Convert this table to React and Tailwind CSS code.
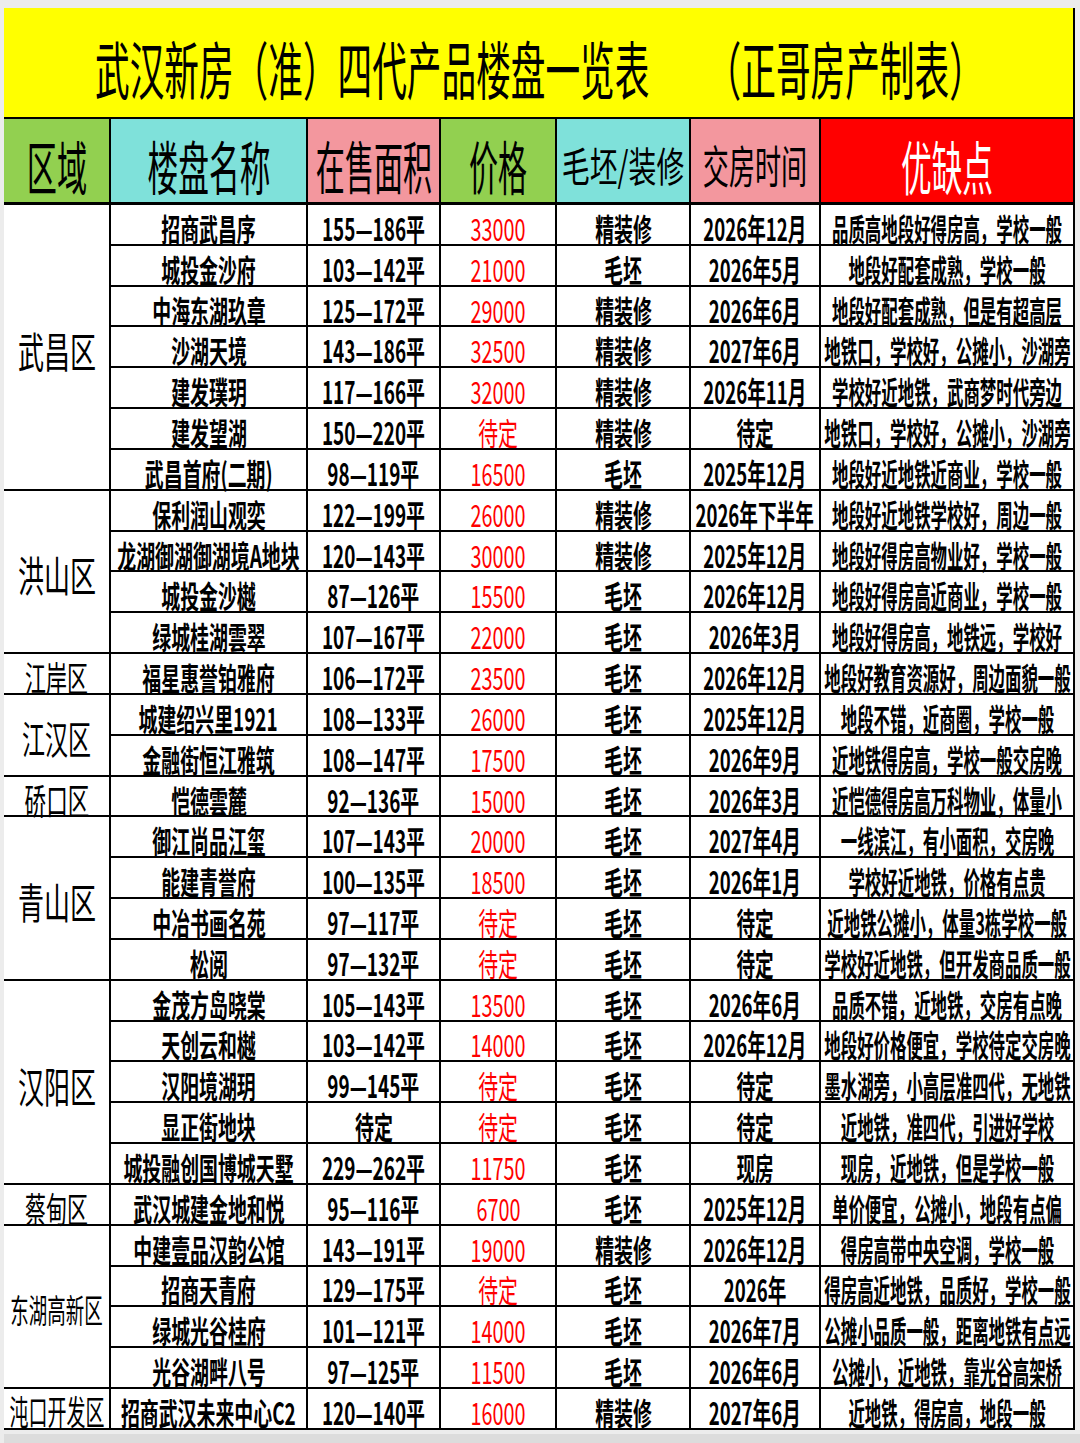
import React from "react";

const groups = [
  {
    d: "武昌区",
    c: "text-[42px] scale-x-[0.62]",
    span: "row-span-7",
    rows: [
      ["招商武昌序", "155—186平", "33000", "精装修", "2026年12月", "品质高地段好得房高，学校一般"],
      ["城投金沙府", "103—142平", "21000", "毛坯", "2026年5月", "地段好配套成熟，学校一般"],
      ["中海东湖玖章", "125—172平", "29000", "精装修", "2026年6月", "地段好配套成熟，但是有超高层"],
      ["沙湖天境", "143—186平", "32500", "精装修", "2027年6月", "地铁口，学校好，公摊小，沙湖旁"],
      ["建发璞玥", "117—166平", "32000", "精装修", "2026年11月", "学校好近地铁，武商梦时代旁边"],
      ["建发望湖", "150—220平", "待定", "精装修", "待定", "地铁口，学校好，公摊小，沙湖旁"],
      ["武昌首府(二期)", "98—119平", "16500", "毛坯", "2025年12月", "地段好近地铁近商业，学校一般"],
    ],
  },
  {
    d: "洪山区",
    c: "text-[42px] scale-x-[0.62]",
    span: "row-span-4",
    rows: [
      ["保利润山观奕", "122—199平", "26000", "精装修", "2026年下半年", "地段好近地铁学校好，周边一般"],
      ["龙湖御湖御湖境A地块", "120—143平", "30000", "精装修", "2025年12月", "地段好得房高物业好，学校一般"],
      ["城投金沙樾", "87—126平", "15500", "毛坯", "2026年12月", "地段好得房高近商业，学校一般"],
      ["绿城桂湖雲翠", "107—167平", "22000", "毛坯", "2026年3月", "地段好得房高，地铁远，学校好"],
    ],
  },
  {
    d: "江岸区",
    c: "text-[35px] scale-x-[0.6]",
    span: "row-span-1",
    rows: [["福星惠誉铂雅府", "106—172平", "23500", "毛坯", "2026年12月", "地段好教育资源好，周边面貌一般"]],
  },
  {
    d: "江汉区",
    c: "text-[39px] scale-x-[0.59]",
    span: "row-span-2",
    rows: [
      ["城建绍兴里1921", "108—133平", "26000", "毛坯", "2025年12月", "地段不错，近商圈，学校一般"],
      ["金融街恒江雅筑", "108—147平", "17500", "毛坯", "2026年9月", "近地铁得房高，学校一般交房晚"],
    ],
  },
  {
    d: "硚口区",
    c: "text-[36px] scale-x-[0.6]",
    span: "row-span-1",
    rows: [["恺德雲麓", "92—136平", "15000", "毛坯", "2026年3月", "近恺德得房高万科物业，体量小"]],
  },
  {
    d: "青山区",
    c: "text-[42px] scale-x-[0.62]",
    span: "row-span-4",
    rows: [
      ["御江尚品江玺", "107—143平", "20000", "毛坯", "2027年4月", "一线滨江，有小面积，交房晚"],
      ["能建青誉府", "100—135平", "18500", "毛坯", "2026年1月", "学校好近地铁，价格有点贵"],
      ["中冶书画名苑", "97—117平", "待定", "毛坯", "待定", "近地铁公摊小，体量3栋学校一般"],
      ["松阅", "97—132平", "待定", "毛坯", "待定", "学校好近地铁，但开发商品质一般"],
    ],
  },
  {
    d: "汉阳区",
    c: "text-[42px] scale-x-[0.62]",
    span: "row-span-5",
    rows: [
      ["金茂方岛晓棠", "105—143平", "13500", "毛坯", "2026年6月", "品质不错，近地铁，交房有点晚"],
      ["天创云和樾", "103—142平", "14000", "毛坯", "2026年12月", "地段好价格便宜，学校待定交房晚"],
      ["汉阳境湖玥", "99—145平", "待定", "毛坯", "待定", "墨水湖旁，小高层准四代，无地铁"],
      ["显正街地块", "待定", "待定", "毛坯", "待定", "近地铁，准四代，引进好学校"],
      ["城投融创国博城天墅", "229—262平", "11750", "毛坯", "现房", "现房，近地铁，但是学校一般"],
    ],
  },
  {
    d: "蔡甸区",
    c: "text-[35px] scale-x-[0.6]",
    span: "row-span-1",
    rows: [["武汉城建金地和悦", "95—116平", "6700", "毛坯", "2025年12月", "单价便宜，公摊小，地段有点偏"]],
  },
  {
    d: "东湖高新区",
    c: "text-[33px] scale-x-[0.56]",
    span: "row-span-4",
    rows: [
      ["中建壹品汉韵公馆", "143—191平", "19000", "精装修", "2026年12月", "得房高带中央空调，学校一般"],
      ["招商天青府", "129—175平", "待定", "毛坯", "2026年", "得房高近地铁，品质好，学校一般"],
      ["绿城光谷桂府", "101—121平", "14000", "毛坯", "2026年7月", "公摊小品质一般，距离地铁有点远"],
      ["光谷湖畔八号", "97—125平", "11500", "毛坯", "2026年6月", "公摊小，近地铁，靠光谷高架桥"],
    ],
  },
  {
    d: "沌口开发区",
    c: "text-[34px] scale-x-[0.56]",
    span: "row-span-1",
    rows: [["招商武汉未来中心C2", "120—140平", "16000", "精装修", "2027年6月", "近地铁，得房高，地段一般"]],
  },
];

const colText = [
  "text-[31px] scale-x-[0.61] font-bold text-black",
  "text-[31px] scale-x-[0.61] font-bold text-black",
  "text-[31px] scale-x-[0.64] text-[#ff0000]",
  "text-[31px] scale-x-[0.61] font-bold text-black",
  "text-[31px] scale-x-[0.6] font-bold text-black",
  "text-[31px] scale-x-[0.53] font-bold text-black",
];

function T({ c, children }) {
  return <span className={"inline-block whitespace-nowrap leading-none " + c}>{children}</span>;
}

function Cell({ children, className = "" }) {
  return (
    <div className={"flex items-center justify-center bg-white pt-[6px] " + className}>{children}</div>
  );
}

const headers = [
  { t: "区域", bg: "bg-[#92d050]", c: "text-[58px] scale-x-[0.52] text-black" },
  { t: "楼盘名称", bg: "bg-[#7fe1da]", c: "text-[58px] scale-x-[0.53] text-black" },
  { t: "在售面积", bg: "bg-[#f3979e]", c: "text-[57px] scale-x-[0.51] text-black" },
  { t: "价格", bg: "bg-[#92d050]", c: "text-[58px] scale-x-[0.5] text-black" },
  { t: "毛坯/装修", bg: "bg-[#7fe1da]", c: "text-[41px] scale-x-[0.68] text-black" },
  { t: "交房时间", bg: "bg-[#f3979e]", c: "text-[45px] scale-x-[0.58] text-black" },
  { t: "优缺点", bg: "bg-[#ff0000]", c: "text-[58px] scale-x-[0.53] text-white" },
];

export default function App() {
  return (
    <div className="w-[1080px] h-[1443px] overflow-hidden bg-[#ececec] pt-[8px] pl-[4px] font-['Noto_Sans_CJK_SC','Noto_Sans_CJK_JP',sans-serif]">
      <div className="grid w-fit grid-cols-[105px_195px_131px_114px_132px_128px_252px] grid-rows-[109px_84px_repeat(30,38.83px)] gap-[2px] bg-black pr-[2px] pb-[2px]">
        <div className="col-span-7 flex items-center bg-[#ffff00] pl-[91px] pt-[8px]">
          <span className="inline-block origin-left scale-x-[0.55] whitespace-nowrap text-[63px] leading-none text-black">
            武汉新房（准）四代产品楼盘一览表
            <span className="ml-[104px]">（正哥房产制表）</span>
          </span>
        </div>
        {headers.map((h) => (
          <div key={h.t} className={"flex items-center justify-center border-b border-black pt-[8px] " + h.bg}>
            <T c={h.c}>{h.t}</T>
          </div>
        ))}
        {groups.map((g) => (
          <React.Fragment key={g.d}>
            <Cell className={g.span}>
              <T c={g.c + " text-black"}>{g.d}</T>
            </Cell>
            {g.rows.map((r, ri) => (
              <React.Fragment key={ri}>
                {r.map((v, ci) => (
                  <Cell key={ci}>
                    <T c={colText[ci]}>{v}</T>
                  </Cell>
                ))}
              </React.Fragment>
            ))}
          </React.Fragment>
        ))}
      </div>
      <div className="mt-[4px] h-[9px] w-[1076px] bg-[#dcdcdc]" />
    </div>
  );
}
